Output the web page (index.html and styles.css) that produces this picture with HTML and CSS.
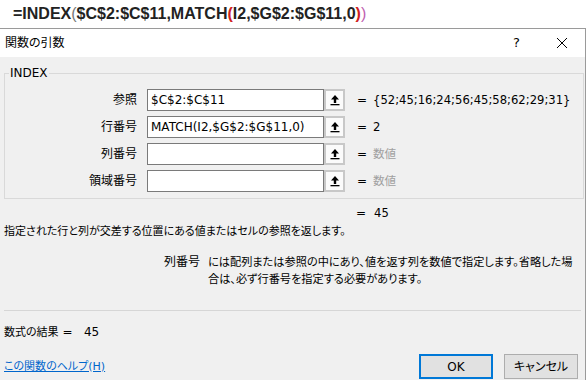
FILE: index.html
```html
<!DOCTYPE html>
<html lang="ja">
<head>
<meta charset="utf-8">
<title>関数の引数</title>
<link rel="stylesheet" href="styles.css">
</head>
<body>
<div class="formula">=INDEX<span class="p0">(</span>$C$2:$C$11,MATCH<span class="p1">(</span>I2,$G$2:$G$11,0<span class="p1">)</span><span class="p2">)</span></div>
<div class="dialog">
  <div class="titlebar">
    <span class="title">関数の引数</span>
    <span class="qmark">?</span>
    <span class="close"><svg width="12" height="12" viewBox="0 0 12 12"><path d="M1 1 L11 11 M11 1 L1 11" stroke="#000" stroke-width="1" fill="none"/></svg></span>
  </div>
  <div class="body">
    <fieldset class="group">
      <legend>INDEX</legend>
      <div class="row">
        <span class="label">参照</span>
        <span class="input">$C$2:$C$11</span>
        <span class="refbtn"><svg width="10" height="12" viewBox="0 0 10 12"><path d="M5 1 L1 5.5 H3.8 V9 H6.2 V5.5 H9 Z" fill="#000"/><rect x="0.5" y="10" width="9" height="1.3" fill="#000"/></svg></span>
        <span class="eq">=</span>
        <span class="val">{52;45;16;24;56;45;58;62;29;31}</span>
      </div>
      <div class="row">
        <span class="label">行番号</span>
        <span class="input">MATCH(I2,$G$2:$G$11,0)</span>
        <span class="refbtn"><svg width="10" height="12" viewBox="0 0 10 12"><path d="M5 1 L1 5.5 H3.8 V9 H6.2 V5.5 H9 Z" fill="#000"/><rect x="0.5" y="10" width="9" height="1.3" fill="#000"/></svg></span>
        <span class="eq">=</span>
        <span class="val">2</span>
      </div>
      <div class="row">
        <span class="label">列番号</span>
        <span class="input"></span>
        <span class="refbtn"><svg width="10" height="12" viewBox="0 0 10 12"><path d="M5 1 L1 5.5 H3.8 V9 H6.2 V5.5 H9 Z" fill="#000"/><rect x="0.5" y="10" width="9" height="1.3" fill="#000"/></svg></span>
        <span class="eq">=</span>
        <span class="val dim">数値</span>
      </div>
      <div class="row">
        <span class="label">領域番号</span>
        <span class="input"></span>
        <span class="refbtn"><svg width="10" height="12" viewBox="0 0 10 12"><path d="M5 1 L1 5.5 H3.8 V9 H6.2 V5.5 H9 Z" fill="#000"/><rect x="0.5" y="10" width="9" height="1.3" fill="#000"/></svg></span>
        <span class="eq">=</span>
        <span class="val dim">数値</span>
      </div>
    </fieldset>
    <div class="total"><span class="eq">=</span><span class="val">45</span></div>
    <div class="desc">指定された行と列が交差する位置にある値またはセルの参照を返します。</div>
    <div class="argdesc">
      <span class="arglabel">列番号</span>
      <span class="argtext">には配列または参照の中にあり、値を返す列を数値で指定します。省略した場<br>合は、必ず行番号を指定する必要があります。</span>
    </div>
    <div class="sep"></div>
    <div class="result"><span class="jp">数式の結果</span> =&nbsp;&nbsp;&nbsp;45</div>
    <div class="footer">
      <a class="helplink" href="#">この関数のヘルプ(H)</a>
      <div class="buttons">
        <span class="btn ok">OK</span>
        <span class="btn">キャンセル</span>
      </div>
    </div>
  </div>
</div>
</body>
</html>
```
FILE: styles.css
```css
html, body {
  margin: 0;
  padding: 0;
  background: #ffffff;
  width: 588px;
  height: 380px;
  overflow: hidden;
}
body {
  font-family: "DejaVu Sans", "Noto Sans CJK JP", sans-serif;
  font-feature-settings: "palt";
  font-size: 12px;
  line-height: 16px;
  color: #000;
}
.formula {
  height: 28px;
  line-height: 28px;
  padding-left: 13px;
  font-family: "Liberation Sans", Arial, sans-serif;
  font-weight: bold;
  font-size: 16px;
  color: #222;
  box-sizing: border-box;
}
.formula .p0 { color: #777; font-weight: normal; }
.formula .p1 { color: #d02020; }
.formula .p2 { color: #c060b0; font-weight: normal; }
.dialog {
  width: 586px;
  height: 352px;
  box-sizing: border-box;
  border-top: 1px solid #9a9a9a;
  border-right: 1px solid #9a9a9a;
  background: #f0f0f0;
}
.titlebar {
  height: 28px;
  background: #fff;
  display: flex;
  align-items: center;
  padding-left: 5px;
}
.title { flex: 1; }
.qmark {
  width: 10px;
  margin-right: 33px;
  font-size: 13px;
}
.close {
  width: 12px;
  height: 12px;
  margin-right: 17px;
  display: flex;
}
.body {
  padding: 0 2px 0 4px;
}
.group {
  margin: 8px 0 0 0;
  padding: 8px 0 6px 0;
  border: 1px solid #d9d9d9;
  width: 580px;
  box-sizing: border-box;
  display: flex;
  flex-direction: column;
  gap: 5px;
}
.group legend {
  margin-left: 4px;
  padding: 0 1px;
  line-height: 16px;
}
.row {
  display: flex;
  align-items: center;
  height: 22px;
}
.label {
  width: 142px;
  flex-shrink: 0;
  padding-right: 10px;
  box-sizing: border-box;
  text-align: right;
}
.input {
  width: 177px;
  flex-shrink: 0;
  height: 22px;
  box-sizing: border-box;
  border: 1px solid #7a7a7a;
  background: #fff;
  padding-left: 3px;
  line-height: 20px;
  white-space: nowrap;
  overflow: hidden;
}
.refbtn {
  width: 21px;
  flex-shrink: 0;
  height: 22px;
  box-sizing: border-box;
  border: 2px solid #c8c8c8;
  background: #fbfbfb;
  display: flex;
  align-items: center;
  justify-content: center;
}
.row .eq { margin-left: 12px; }
.eq { width: 6px; flex-shrink: 0; }
.val { margin-left: 10px; white-space: nowrap; font-size: 11.6px; }
.dim { color: #a0a0a0; }
.total {
  display: flex;
  margin-top: 6px;
  padding-left: 352px;
}
.total .val { margin-left: 12px; }
.desc {
  margin-top: 3px;
  white-space: nowrap;
  font-size: 11px;
}
.argdesc {
  display: flex;
  margin-top: 14px;
  line-height: 17px;
}
.arglabel {
  width: 204px;
  flex-shrink: 0;
  text-align: right;
  padding-right: 8px;
  box-sizing: border-box;
}
.argtext {
  white-space: nowrap;
  font-size: 11.2px;
}
.sep {
  height: 1px;
  background: #d6d6d6;
  width: 577px;
  margin-top: 22px;
}
.result {
  margin-top: 13px;
}
.result .jp { font-size: 11px; }
.footer {
  display: flex;
  align-items: center;
  margin-top: 13px;
  height: 25px;
  padding-right: 5px;
}
.helplink {
  flex: 1;
  color: #0066cc;
  text-decoration: underline;
  font-size: 11px;
}
.buttons {
  display: flex;
  gap: 11px;
}
.btn {
  width: 74px;
  height: 25px;
  box-sizing: border-box;
  border: 1px solid #adadad;
  background: #e1e1e1;
  display: flex;
  align-items: center;
  justify-content: center;
}
.btn.ok {
  border: 2px solid #0078d7;
}
```
